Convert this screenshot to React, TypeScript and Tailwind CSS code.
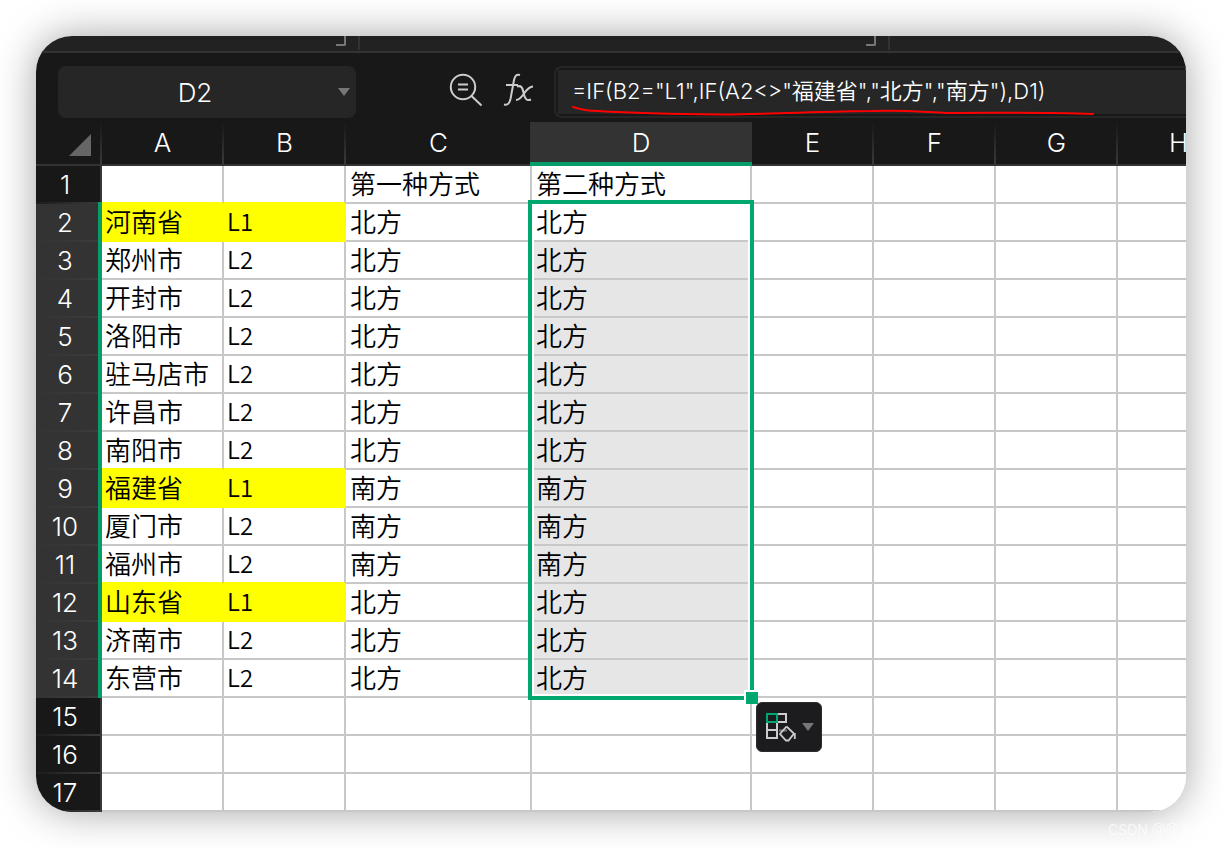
type Row = { a?: string; b?: string; c?: string; d?: string };

const columns = ["A", "B", "C", "D", "E", "F", "G", "H"];

const rows: Row[] = [
  { c: "第一种方式", d: "第二种方式" },
  { a: "河南省", b: "L1", c: "北方", d: "北方" },
  { a: "郑州市", b: "L2", c: "北方", d: "北方" },
  { a: "开封市", b: "L2", c: "北方", d: "北方" },
  { a: "洛阳市", b: "L2", c: "北方", d: "北方" },
  { a: "驻马店市", b: "L2", c: "北方", d: "北方" },
  { a: "许昌市", b: "L2", c: "北方", d: "北方" },
  { a: "南阳市", b: "L2", c: "北方", d: "北方" },
  { a: "福建省", b: "L1", c: "南方", d: "南方" },
  { a: "厦门市", b: "L2", c: "南方", d: "南方" },
  { a: "福州市", b: "L2", c: "南方", d: "南方" },
  { a: "山东省", b: "L1", c: "北方", d: "北方" },
  { a: "济南市", b: "L2", c: "北方", d: "北方" },
  { a: "东营市", b: "L2", c: "北方", d: "北方" },
  {},
  {},
  {},
];

const uiFont = "font-['Inter','Noto_Sans_CJK_SC',sans-serif]";
const sheetFont = "font-['Noto_Sans_CJK_SC',sans-serif] font-[350] text-black";

function RibbonStrip() {
  return (
    <div className="flex h-[17px] shrink-0 items-start border-b-2 border-[#333333] bg-[#222222]">
      <div className="flex h-[14px] w-[324px] shrink-0 items-start justify-end border-r-2 border-[#333333] pr-3">
        <span className="h-[10px] w-[10px] rounded-br-xs border-r-2 border-b-2 border-[#777777]" />
      </div>
      <div className="flex h-[14px] w-[530px] shrink-0 items-start justify-end border-r-2 border-[#333333] pr-3">
        <span className="h-[10px] w-[10px] rounded-br-xs border-r-2 border-b-2 border-[#777777]" />
      </div>
    </div>
  );
}

function FormulaBar() {
  return (
    <div className="flex h-[69px] shrink-0 items-start bg-[#181818] pt-[13px] pl-[22px]">
      <div className="flex h-[52px] w-[298px] shrink-0 items-center rounded-lg bg-[#262626] pr-[6px]">
        <input
          aria-label="Name box"
          defaultValue="D2"
          className="w-0 flex-1 bg-transparent pr-1.5 text-center text-[26px] font-light text-white outline-none"
        />
        <button aria-label="Choose name" className="flex w-3 justify-center">
          <svg width="12" height="8" viewBox="0 0 12 8" fill="#777777">
            <path d="M0 0h12L6 8z" />
          </svg>
        </button>
      </div>
      <button aria-label="Zoom formula" className="mt-[6px] ml-[92px] shrink-0">
        <svg width="36" height="36" viewBox="0 0 36 36" fill="none" stroke="#cccccc" strokeWidth="2">
          <circle cx="15" cy="15" r="12.2" />
          <path d="M23.5 24L33.5 33.5M10 12.500h10M10 17.500h10" />
        </svg>
      </button>
      <button aria-label="Insert function" className="mt-[6px] ml-[18px] shrink-0">
        <svg width="34" height="36" viewBox="0 0 34 36" fill="none" stroke="#cccccc" strokeWidth="2">
          <path d="M2 32.500C6 33.500 7.600 31 8.500 27L12 8C13 3.500 14.500 2 18 3M4 13h12" />
          <path d="M15 14.500C19.500 13 20.500 16 21.500 20.500C22.500 26 24.500 29.500 29 27.500M31 14.500C27 14.500 24.500 18 22 21.500C19.500 25 18 28 14 28" />
        </svg>
      </button>
      <div className="relative ml-[18px] flex h-[52px] flex-1 rounded-l-lg border-2 border-r-0 border-[#262626] py-[2px] pl-[2px]">
        <input
          aria-label="Formula"
          defaultValue={'=IF(B2="L1",IF(A2<>"福建省","北方","南方"),D1)'}
          className="w-full bg-[#262626] pb-0.5 pl-3.5 text-[22px] font-[350] text-white outline-none"
        />
        <svg
          className="pointer-events-none absolute top-[35px] left-[16px]"
          width="524"
          height="14"
          viewBox="0 0 524 14"
          fill="none"
          stroke="#ff0000"
          strokeWidth="2"
          strokeLinecap="round"
        >
          <path d="M1 4C10 7 16 8 26 8C60 10 100 11 150 11.500C200 11 260 8 300 8C335 7 350 9 375 10C430 10 470 9 521 11" />
        </svg>
      </div>
    </div>
  );
}

function ColumnHeader({ name }: { name: string }) {
  if (name === "D") {
    return (
      <th
        scope="col"
        className="relative h-11 border-b-4 border-[#069d69] bg-[#333333] p-0 pr-0.5 text-[26px] font-light before:absolute before:-bottom-1 before:-left-0.5 before:h-1 before:w-0.5 before:bg-[#069d69]"
      >
        <span className="block pt-0.5 leading-[38px]">{name}</span>
      </th>
    );
  }
  return (
    <th
      scope="col"
      className={
        "h-11 border-b-2 border-[#333333] bg-[#181818] bg-[length:2px_100%] bg-right bg-no-repeat p-0 pr-px text-[26px] leading-[42px] font-light " +
        (name === "C"
          ? "bg-[linear-gradient(#333333,#333333)]"
          : "bg-[linear-gradient(to_bottom,#181818,#3a3a3a)]")
      }
    >
      {name}
    </th>
  );
}

function RowHeader({ index, selected }: { index: number; selected: boolean }) {
  return (
    <th
      scope="row"
      className={
        "relative h-[38px] bg-[length:100%_2px] bg-bottom bg-no-repeat p-0 text-[26px] leading-[38px] font-light text-white " +
        (selected
          ? "border-r-4 border-[#069d69] bg-[#333333] bg-[linear-gradient(to_right,#333333,#3c3c3c)] pr-1 "
          : "border-r-2 border-[#3a3735] bg-[#181818] bg-[linear-gradient(to_right,#1c1c1c,#3a3a3a)] pr-[6px] ") +
        (index === 2
          ? "before:absolute before:-top-0.5 before:-right-1 before:h-0.5 before:w-1 before:bg-[#069d69]"
          : "")
      }
    >
      {index}
    </th>
  );
}

function Sheet() {
  return (
    <div className="relative">
      <table className="w-full min-w-[1204px] table-fixed border-separate border-spacing-0">
        <colgroup>
          <col className="w-[66px]" />
          <col className="w-[122px]" />
          <col className="w-[122px]" />
          <col className="w-[186px]" />
          <col className="w-[220px]" />
          <col className="w-[122px]" />
          <col className="w-[122px]" />
          <col className="w-[122px]" />
          <col />
        </colgroup>
        <thead>
          <tr className="text-white">
            <th className="h-11 border-b-2 border-[#333333] bg-[#181818] bg-[linear-gradient(to_bottom,#181818,#3a3a3a)] bg-[length:2px_100%] bg-right bg-no-repeat p-0">
              <button aria-label="Select all" className="mt-1 ml-[33px] block">
                <svg width="22" height="22" viewBox="0 0 22 22" fill="#666666">
                  <path d="M22 0v22H0z" />
                </svg>
              </button>
            </th>
            {columns.map((name) => (
              <ColumnHeader key={name} name={name} />
            ))}
          </tr>
        </thead>
        <tbody>
          {rows.map((row, i) => {
            const province = row.b === "L1";
            const beforeProvince = rows[i + 1]?.b === "L1";
            const selected = i >= 1 && i <= 13;
            const keyCell =
              "border-r-2 border-b-2 p-0 pb-0.5 pl-[3px] leading-[34px] " +
              (province ? "border-r-[#ffff00] bg-[#ffff00] " : "border-r-[#c8c8c8] bg-white ") +
              (province || beforeProvince ? "border-b-[#ffff00] " : "border-b-[#c8c8c8] ");
            const cell = "border-r-2 border-b-2 border-[#c8c8c8] p-0 pb-0.5 pl-1 leading-[34px] ";
            return (
              <tr key={i}>
                <RowHeader index={i + 1} selected={selected} />
                <td className={keyCell + "text-[26px] whitespace-nowrap " + sheetFont}>{row.a}</td>
                <td className={keyCell + "text-[24px] " + sheetFont}>{row.b}</td>
                <td className={cell + "bg-white text-[26px] " + sheetFont}>{row.c}</td>
                <td className={cell + "text-[26px] " + sheetFont + (i >= 2 && selected ? " bg-[#e6e6e6]" : " bg-white")}>
                  {row.d}
                </td>
                <td className={cell + "bg-white"} />
                <td className={cell + "bg-white"} />
                <td className={cell + "bg-white"} />
                <td className={cell + "bg-white"} />
              </tr>
            );
          })}
        </tbody>
      </table>
      <div className="pointer-events-none absolute top-[78px] left-[492px] h-[500px] w-[226px] border-4 border-[#00a870]">
        <div className="h-full border-2 border-white" />
        <div className="absolute -right-2 -bottom-2 h-[14px] w-[14px] border-t-2 border-l-2 border-white bg-[#00a870]" />
      </div>
      <button
        aria-label="Auto fill options"
        className="absolute top-[580px] left-[720px] flex h-[50px] w-[66px] items-center gap-[5px] rounded-md border border-[#2d2d2f] bg-[#1c1c1e] pl-[8px]"
      >
        <svg width="32" height="30" viewBox="0 0 32 30" fill="none" strokeWidth="2">
          <path d="M12 2h9v8h-9M2 10v16h10V10M2 18h10" stroke="#cccccc" />
          <path d="M14 18.500h8" stroke="#777777" />
          <path
            d="M21.500 14.500L29 21.500L23.500 28.500H21L15 22L21.500 14.500M29.800 21v6"
            stroke="#cccccc"
            strokeWidth="1.800"
          />
          <rect x="2" y="2" width="10" height="8" stroke="#00a870" />
        </svg>
        <svg width="12" height="8" viewBox="0 0 12 8" fill="#777777">
          <path d="M0 0h12L6 8z" />
        </svg>
      </button>
    </div>
  );
}

export default function App() {
  return (
    <main className={"relative overflow-hidden bg-white p-9 " + uiFont}>
      <div className="overflow-hidden rounded-[36px] bg-white shadow-[0_0_40px_rgba(0,0,0,0.36)]">
        <RibbonStrip />
        <FormulaBar />
        <Sheet />
      </div>
      <p className="absolute right-0 bottom-2 w-[114px] text-[14px] leading-5 whitespace-nowrap text-white/70">
        CSDN @@李云
      </p>
    </main>
  );
}
